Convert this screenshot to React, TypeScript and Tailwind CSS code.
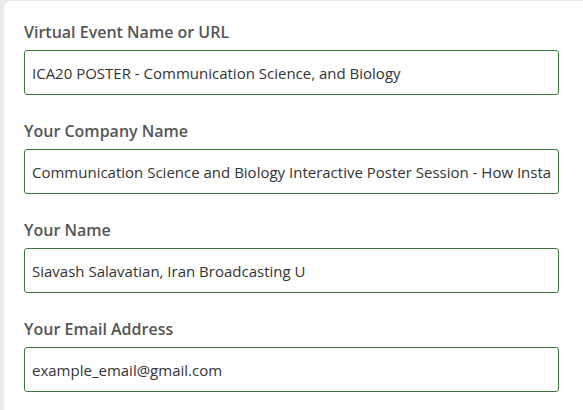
const fields = [
  { label: "Virtual Event Name or URL", value: "ICA20 POSTER - Communication Science, and Biology" },
  {
    label: "Your Company Name",
    value: "Communication Science and Biology Interactive Poster Session - How Instagram Influencers Shape Health Behavior",
  },
  { label: "Your Name", value: "Siavash Salavatian, Iran Broadcasting U" },
  { label: "Your Email Address", value: "example_email@gmail.com" },
];

export default function App() {
  return (
    <div className="h-[410px] overflow-hidden bg-[#ebebeb] pl-[4px] pt-[1px] font-['Open_Sans',sans-serif]">
      <div className="h-[420px] rounded-tl-[6px] bg-white pl-[20px] pt-[20px]">
        {fields.map((f) => (
          <div key={f.label} className="mb-[25px]">
            <label className="block text-[16px] font-semibold leading-[22px] text-[#555]">{f.label}</label>
            <input
              readOnly
              value={f.value}
              className="mt-[7px] box-border block h-[45px] w-[535px] rounded-[3px] border border-[#3c7a3c] bg-white px-[7px] text-[15px] text-[#333] outline-none"
            />
          </div>
        ))}
      </div>
    </div>
  );
}
